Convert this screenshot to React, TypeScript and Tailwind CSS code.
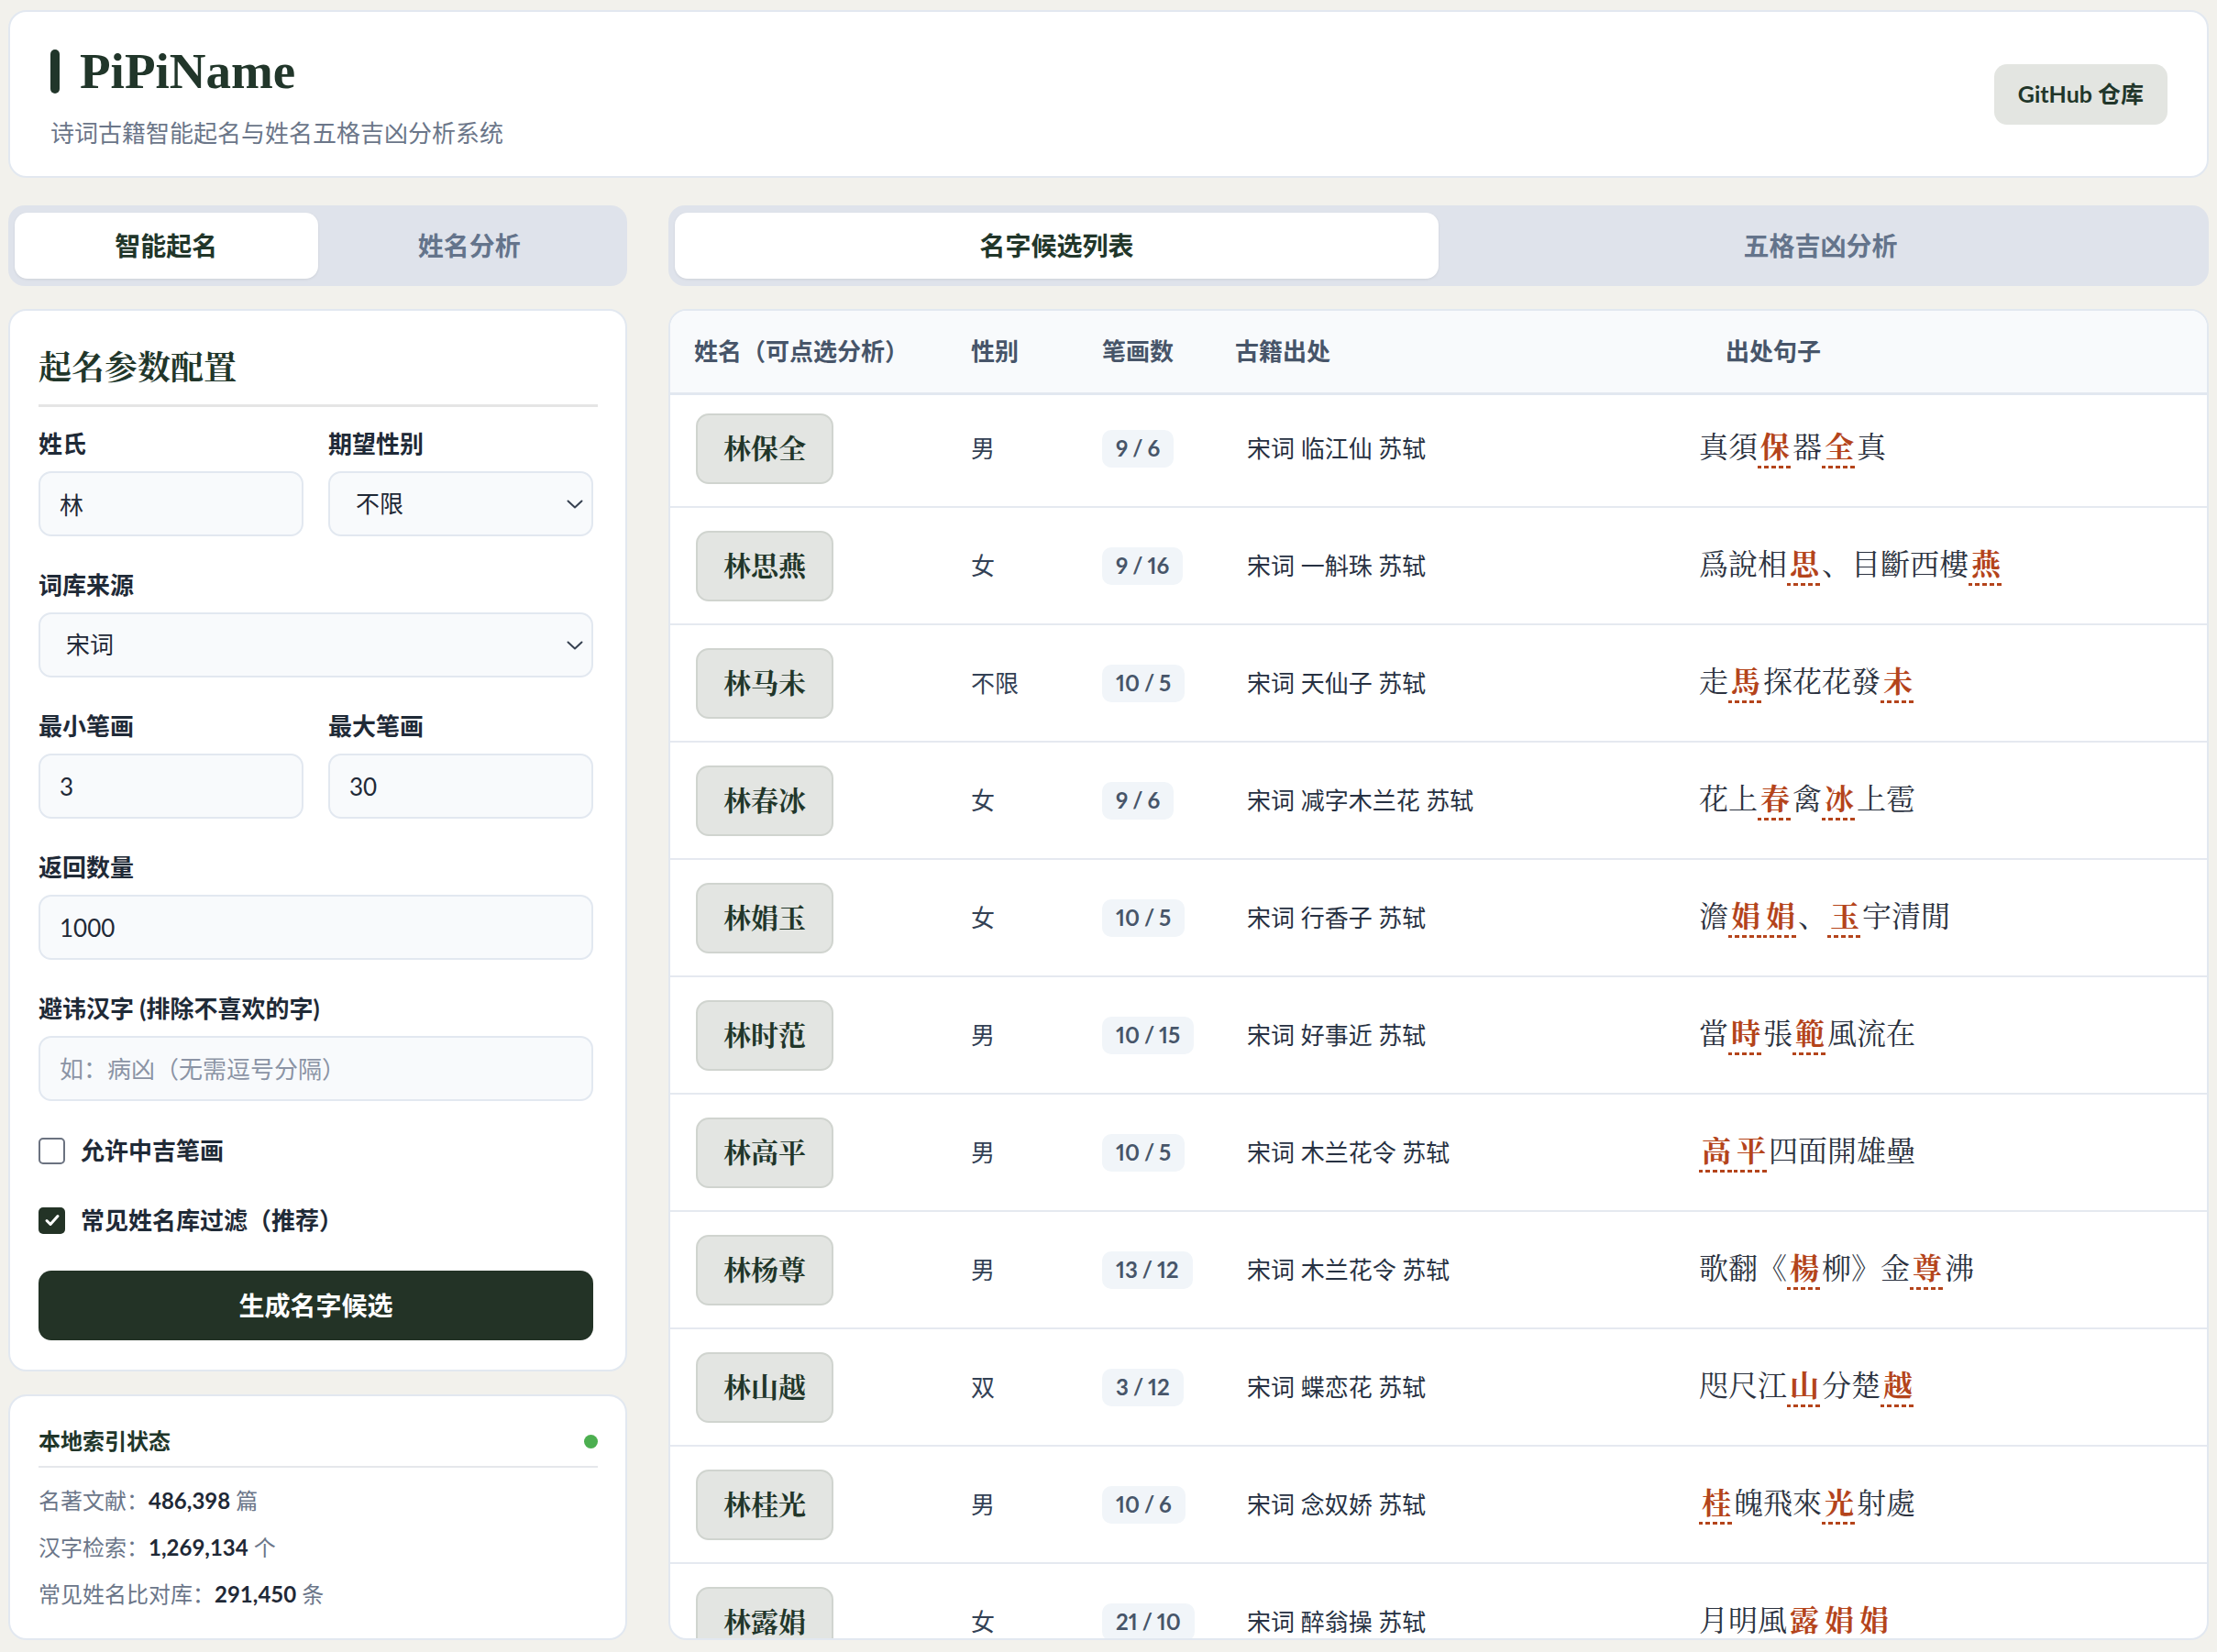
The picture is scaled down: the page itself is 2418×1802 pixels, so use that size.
import React, { useState } from 'react';

const SANS = { fontFamily: 'Lato, "Noto Sans CJK SC", sans-serif' };
const SERIF = { fontFamily: '"Liberation Serif", "Noto Serif CJK SC", "Noto Sans CJK SC", serif' };

type Row = {
  name: string;
  gender: string;
  strokes: [number, number];
  source: string;
  quote: (string | [string])[];
};

// [x] marks a character that matches the given name
const rows: Row[] = [
  { name: '林保全', gender: '男', strokes: [9, 6], source: '宋词 临江仙 苏轼', quote: ['真須', ['保'], '器', ['全'], '真'] },
  { name: '林思燕', gender: '女', strokes: [9, 16], source: '宋词 一斛珠 苏轼', quote: ['爲說相', ['思'], '、目斷西樓', ['燕']] },
  { name: '林马未', gender: '不限', strokes: [10, 5], source: '宋词 天仙子 苏轼', quote: ['走', ['馬'], '探花花發', ['未']] },
  { name: '林春冰', gender: '女', strokes: [9, 6], source: '宋词 减字木兰花 苏轼', quote: ['花上', ['春'], '禽', ['冰'], '上雹'] },
  { name: '林娟玉', gender: '女', strokes: [10, 5], source: '宋词 行香子 苏轼', quote: ['澹', ['娟'], ['娟'], '、', ['玉'], '宇清閒'] },
  { name: '林时范', gender: '男', strokes: [10, 15], source: '宋词 好事近 苏轼', quote: ['當', ['時'], '張', ['範'], '風流在'] },
  { name: '林高平', gender: '男', strokes: [10, 5], source: '宋词 木兰花令 苏轼', quote: [['高'], ['平'], '四面開雄壘'] },
  { name: '林杨尊', gender: '男', strokes: [13, 12], source: '宋词 木兰花令 苏轼', quote: ['歌翻《', ['楊'], '柳》金', ['尊'], '沸'] },
  { name: '林山越', gender: '双', strokes: [3, 12], source: '宋词 蝶恋花 苏轼', quote: ['咫尺江', ['山'], '分楚', ['越']] },
  { name: '林桂光', gender: '男', strokes: [10, 6], source: '宋词 念奴娇 苏轼', quote: [['桂'], '魄飛來', ['光'], '射處'] },
  { name: '林露娟', gender: '女', strokes: [21, 10], source: '宋词 醉翁操 苏轼', quote: ['月明風', ['露'], ['娟'], ['娟']] },
];

function Tabs({ items, active }: { items: string[]; active: number }) {
  return (
    <div className="h-[88px] shrink-0 rounded-[18px] bg-[#dfe3eb] px-[7px] py-[8px] grid grid-cols-2">
      {items.map((t, i) => (
        <div
          key={t}
          className={
            i === active
              ? 'flex items-center justify-center rounded-[14px] bg-white text-[28px] font-bold text-[#21362a] shadow-[0_1px_3px_rgba(0,0,0,0.08)]'
              : 'flex items-center justify-center text-[28px] font-bold text-[#64748b]'
          }
        >
          {t}
        </div>
      ))}
    </div>
  );
}

function Label({ children }: { children: React.ReactNode }) {
  return <div className="text-[26px] leading-[32px] font-bold text-[#1f2a37]">{children}</div>;
}

function Field({ value, placeholder }: { value?: string; placeholder?: string }) {
  return (
    <input
      defaultValue={value}
      placeholder={placeholder}
      className="h-[71px] w-full rounded-[14px] border-2 border-[#e2e8f0] bg-[#f8fafc] px-[21px] text-[26px] text-[#1f2937] placeholder:text-[#8b94a5] outline-none"
      style={SANS}
    />
  );
}

function FakeSelect({ value }: { value: string }) {
  return (
    <div className="h-[71px] w-full rounded-[14px] border-2 border-[#e2e8f0] bg-[#f8fafc] pl-[28px] pr-[9px] flex items-center justify-between text-[26px] text-[#1f2937]">
      <span>{value}</span>
      <svg width="18" height="10" viewBox="0 0 18 10" fill="none">
        <path d="M1.5 1.5l7.5 7 7.5-7" stroke="#374151" strokeWidth="2" strokeLinecap="round" strokeLinejoin="round" />
      </svg>
    </div>
  );
}

function Check({ checked, label }: { checked: boolean; label: string }) {
  return (
    <div className="flex items-center gap-[17px] h-[30px]">
      <div
        className={
          checked
            ? 'w-[29px] h-[29px] rounded-[5px] bg-[#233326] flex items-center justify-center'
            : 'w-[29px] h-[29px] rounded-[5px] border-2 border-[#6b7280] bg-white'
        }
      >
        {checked && (
          <svg width="20" height="20" viewBox="0 0 20 20" fill="none">
            <path d="M4 10.5l4 4 8-9" stroke="white" strokeWidth="3" strokeLinecap="round" strokeLinejoin="round" />
          </svg>
        )}
      </div>
      <span className="text-[26px] font-bold text-[#1f2a37]">{label}</span>
    </div>
  );
}

function Quote({ parts }: { parts: (string | [string])[] }) {
  return (
    <div className="text-[32px] leading-[40px] text-[#2b3240] whitespace-nowrap" style={SERIF}>
      {parts.map((p, i) =>
        typeof p === 'string' ? (
          <span key={i}>{p}</span>
        ) : (
          <span
            key={i}
            className="inline-block px-[3px] pb-[5px] font-bold text-[#b4441b] leading-[36px] bg-[linear-gradient(to_right,#b4441b_66%,transparent_0)] bg-[length:8px_3px] bg-repeat-x bg-bottom"
          >
            {p[0]}
          </span>
        )
      )}
    </div>
  );
}

export default function App() {
  const [tab] = useState(0);

  return (
    <div className="h-screen overflow-hidden bg-[#f2f1ec] px-[9px] pt-[11px] pb-[13px] flex flex-col gap-[30px]" style={SANS}>
      {/* header */}
      <div className="h-[183px] shrink-0 rounded-[20px] border-2 border-[#e2e8f0] bg-white pl-[44px] pr-[43px] flex items-center justify-between">
        <div className="flex flex-col pt-[5px]">
          <div className="flex items-center gap-[22px]">
            <div className="w-[10px] h-[48px] rounded-full bg-[#21362a]" />
            <h1 className="text-[55px] leading-[60px] font-bold text-[#21362a]" style={SERIF}>PiPiName</h1>
          </div>
          <p className="mt-[20px] text-[26px] leading-[34px] text-[#6b7689]">诗词古籍智能起名与姓名五格吉凶分析系统</p>
        </div>
        <button className="h-[66px] px-[26px] rounded-[14px] bg-[#e3e5e1] text-[25px] font-bold text-[#21362a]">
          GitHub 仓库
        </button>
      </div>

      <div className="flex-1 min-h-0 grid grid-cols-[675px_1fr] gap-[45px]">
        {/* left column */}
        <div className="flex flex-col gap-[25px] min-h-0">
          <Tabs items={['智能起名', '姓名分析']} active={tab} />

          <div className="shrink-0 rounded-[20px] border-2 border-[#e2e8f0] bg-white pl-[31px] pr-[35px] pt-[40px] pb-[32px]">
            <h2 className="text-[36px] leading-[47px] font-bold text-[#21362a] pb-[15px] border-b-[3px] border-[#e5e5e5] -mr-[5px]" style={SERIF}>
              起名参数配置
            </h2>

            <div className="mt-[24px] flex flex-col gap-[37px]">
              <div className="grid grid-cols-2 gap-[27px]">
                <div className="flex flex-col gap-[14px]">
                  <Label>姓氏</Label>
                  <Field value="林" />
                </div>
                <div className="flex flex-col gap-[14px]">
                  <Label>期望性别</Label>
                  <FakeSelect value="不限" />
                </div>
              </div>

              <div className="flex flex-col gap-[14px]">
                <Label>词库来源</Label>
                <FakeSelect value="宋词" />
              </div>

              <div className="grid grid-cols-2 gap-[27px]">
                <div className="flex flex-col gap-[14px]">
                  <Label>最小笔画</Label>
                  <Field value="3" />
                </div>
                <div className="flex flex-col gap-[14px]">
                  <Label>最大笔画</Label>
                  <Field value="30" />
                </div>
              </div>

              <div className="flex flex-col gap-[14px]">
                <Label>返回数量</Label>
                <Field value="1000" />
              </div>

              <div className="flex flex-col gap-[14px]">
                <Label>避讳汉字 (排除不喜欢的字)</Label>
                <Field placeholder="如：病凶（无需逗号分隔）" />
              </div>
            </div>

            <div className="mt-[39px] flex flex-col gap-[46px]">
              <Check checked={false} label="允许中吉笔画" />
              <Check checked={true} label="常见姓名库过滤（推荐）" />
            </div>

            <button className="mt-[40px] w-full h-[76px] rounded-[14px] bg-[#233326] text-white text-[28px] font-bold">
              生成名字候选
            </button>
          </div>

          <div className="flex-1 min-h-0 rounded-[20px] border-2 border-[#e2e8f0] bg-white pl-[31px] pr-[30px] pt-[34px]">
            <div className="flex items-center justify-between pb-[12px] border-b-2 border-[#e5e7eb]">
              <span className="text-[24px] leading-[30px] font-bold text-[#21362a]">本地索引状态</span>
              <span className="w-[15px] h-[15px] rounded-full bg-[#4caf50]" />
            </div>
            <div className="mt-[21px] flex flex-col gap-[21px] text-[24px] leading-[30px] text-[#6b7689]">
              <div>名著文献：<b className="text-[#1f2937]">486,398</b> 篇</div>
              <div>汉字检索：<b className="text-[#1f2937]">1,269,134</b> 个</div>
              <div>常见姓名比对库：<b className="text-[#1f2937]">291,450</b> 条</div>
            </div>
          </div>
        </div>

        {/* right column */}
        <div className="flex flex-col gap-[25px] min-h-0">
          <Tabs items={['名字候选列表', '五格吉凶分析']} active={0} />

          <div className="flex-1 min-h-0 rounded-[20px] border-2 border-[#e2e8f0] bg-white overflow-hidden flex flex-col">
            <div className="relative z-10 h-[92px] shrink-0 bg-[#f8fafc] border-b-[3px] border-[#e2e8f0] pl-[26px] grid grid-cols-[302px_143px_145px_506px_1fr] items-center text-[26px] font-bold text-[#475569]">
              <div>姓名（可点选分析）</div>
              <div>性别</div>
              <div>笔画数</div>
              <div>古籍出处</div>
              <div className="pl-[29px]">出处句子</div>
            </div>
            <div className="-mt-[5px] flex-1 min-h-0 overflow-hidden">
              {rows.map((r) => (
                <div
                  key={r.name}
                  className="h-[128px] border-b-2 border-[#e5e9f0] pl-[28px] grid grid-cols-[300px_143px_145px_506px_1fr] items-center"
                >
                  <div>
                    <button
                      className="w-[150px] h-[77px] rounded-[14px] border-2 border-[#d0d4cf] bg-[#e3e5e2] text-[30px] font-bold text-[#21362a]"
                      style={SERIF}
                    >
                      {r.name}
                    </button>
                  </div>
                  <div className="text-[26px] text-[#334155]">{r.gender}</div>
                  <div>
                    <span className="inline-flex items-center h-[41px] px-[15px] rounded-[10px] bg-[#f1f5f9] text-[24px] font-bold text-[#475569] proportional-nums">
                      {r.strokes[0]}
                      <span className="mx-[5px]">/</span>
                      {r.strokes[1]}
                    </span>
                  </div>
                  <div className="pl-[13px] text-[26px] text-[#273142]">{r.source}</div>
                  <Quote parts={r.quote} />
                </div>
              ))}
            </div>
          </div>
        </div>
      </div>
    </div>
  );
}
